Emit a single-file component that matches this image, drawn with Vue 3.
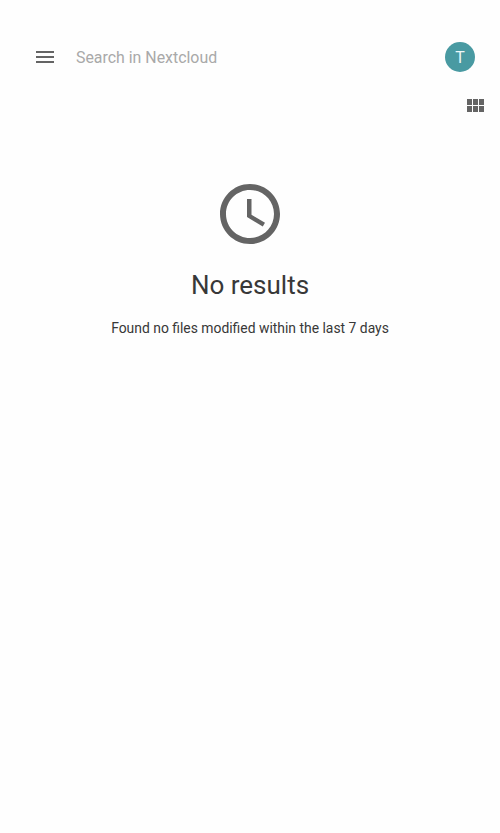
<script setup>
const title = 'No results'
const message = 'Found no files modified within the last 7 days'
</script>

<template>
  <div class="screen">
    <header class="bar">
      <svg class="menu" viewBox="0 0 24 24"><path d="M3 18h18v-2H3v2zm0-5h18v-2H3v2zm0-7v2h18V6H3z" /></svg>
      <span class="search">Search in Nextcloud</span>
      <span class="avatar">T</span>
    </header>
    <div class="tools">
      <svg class="grid" viewBox="0 0 24 24"><path d="M4 11h5V5H4v6zm0 7h5v-6H4v6zm6 0h5v-6h-5v6zm6 0h5v-6h-5v6zm-6-7h5V5h-5v6zm6-6v6h5V5h-5z" /></svg>
    </div>
    <main class="empty">
      <svg class="clock" viewBox="0 0 24 24"><path d="M11.99 2C6.47 2 2 6.48 2 12s4.47 10 9.99 10C17.52 22 22 17.52 22 12S17.52 2 11.99 2zM12 20c-4.42 0-8-3.58-8-8s3.58-8 8-8 8 3.58 8 8-3.58 8-8 8zm.5-13H11v6l5.25 3.15.75-1.23-4.5-2.67z" /></svg>
      <h1>{{ title }}</h1>
      <p>{{ message }}</p>
    </main>
  </div>
</template>

<style>
body { background: #fefefe; }
</style>

<style scoped>
.screen { min-height: 833px; box-sizing: border-box; padding-top: 37px; font-family: Roboto, "Liberation Sans", sans-serif; }
svg { display: block; fill: #646464; }
.bar { display: flex; align-items: center; height: 40px; padding: 0 25px 0 33px; }
.menu { width: 24px; height: 24px; }
.search { flex: 1; margin-left: 19px; padding-top: 2px; font-size: 15.9px; line-height: 20px; color: #a9a9a9; }
.avatar { display: flex; align-items: center; justify-content: center; width: 30px; height: 30px; border-radius: 50%; background: #499aa2; color: #eef7f8; font-size: 16px; }
.tools { display: flex; justify-content: flex-end; padding: 17px 13px 0 0; }
.grid { width: 24px; height: 24px; }
.empty { display: flex; flex-direction: column; align-items: center; padding-top: 60px; color: #383838; }
.clock { width: 72px; height: 72px; }
h1 { margin: 19px 0 0; font-size: 26px; line-height: 32px; font-weight: 400; }
p { margin: 17px 0 0; font-size: 13.9px; line-height: 20px; }
</style>
